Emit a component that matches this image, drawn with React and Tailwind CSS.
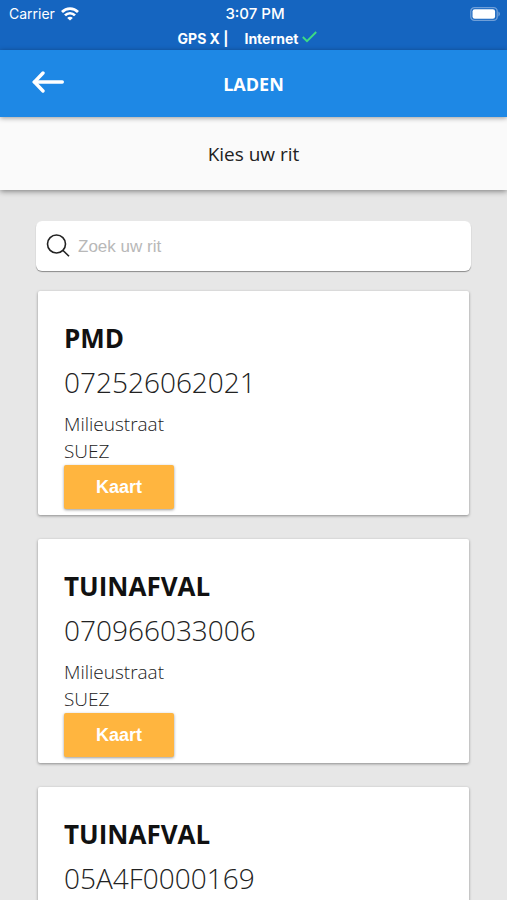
import { useState } from 'react'

const ritten = [
  { id: '072526062021', type: 'PMD', straat: 'Milieustraat', klant: 'SUEZ' },
  { id: '070966033006', type: 'TUINAFVAL', straat: 'Milieustraat', klant: 'SUEZ' },
  { id: '05A4F0000169', type: 'TUINAFVAL', straat: 'Milieustraat', klant: 'SUEZ' },
]

function WifiIcon() {
  return (
    <svg width="18" height="14" viewBox="0 0 18 14" fill="none" stroke="white" strokeWidth="2.7">
      <path d="M1 5C5.4 .4 12.6 .4 17 5" />
      <path d="M4 8.4C6.8 5.5 11.2 5.5 14 8.4" />
      <path d="M9 13.6L6.2 10.9C7.8 9.4 10.2 9.4 11.8 10.9Z" fill="white" stroke="none" />
    </svg>
  )
}

function BatteryIcon() {
  return (
    <svg width="31" height="14" viewBox="0 0 31 14">
      <rect x="0.8" y="0.7" width="26.4" height="12.6" rx="3.6" fill="none" stroke="#6f9fd8" strokeWidth="1.3" />
      <rect x="2.5" y="2.3" width="22.6" height="9.4" rx="2.2" fill="white" />
      <path d="M28.4 4.6C30.4 5.4 30.4 8.6 28.4 9.4Z" fill="#6f9fd8" />
    </svg>
  )
}

function StatusBar() {
  return (
    <div className="h-[50px] shrink-0 bg-[#1565c0] text-white font-['Inter',sans-serif]">
      <div className="grid grid-cols-3 items-center h-7 pl-[9px] pr-[6px] text-sm">
        <div className="flex items-center gap-[6px]">
          <span>Carrier</span>
          <WifiIcon />
        </div>
        <span className="text-center text-[15px] font-medium">3:07 PM</span>
        <div className="flex justify-end">
          <BatteryIcon />
        </div>
      </div>
      <div className="flex justify-center items-center h-[22px] pr-3 text-sm font-bold">
        <span className="mr-4">GPS X |</span>
        <span className="mr-1">Internet</span>
        <svg width="15" height="12" viewBox="0 0 15 12" fill="none" stroke="#3ddc84" strokeWidth="1.9" className="mb-1">
          <path d="M.8 6L5 10.2L14.2 1" />
        </svg>
      </div>
    </div>
  )
}

function RitCard({ rit }) {
  return (
    <li className="bg-white rounded-xs px-[26px] pt-7 pb-[6px] shadow-[0_1px_3px_rgba(0,0,0,0.4)]">
      <h2 className="text-[26px] leading-[38px] font-bold text-[#111111]">{rit.type}</h2>
      <p className="text-[28px] leading-[50px] font-light text-[#222222]">{rit.id}</p>
      <div className="pt-1 text-[19px] leading-[27px] font-light text-[#222222]">
        <p>{rit.straat}</p>
        <p>{rit.klant}</p>
      </div>
      <button
        type="button"
        className="block w-[110px] h-11 rounded-xs bg-[#ffb53f] text-white text-[18px] font-bold font-['Liberation_Sans',sans-serif] shadow-[0_1px_3px_rgba(0,0,0,0.4)]"
      >
        Kaart
      </button>
    </li>
  )
}

function App() {
  const [zoek, setZoek] = useState('')

  const gefilterd = ritten.filter(r => `${r.type} ${r.id}`.toLowerCase().includes(zoek.toLowerCase()))

  return (
    <div className="flex flex-col h-screen bg-[#e7e7e7] font-['Open_Sans',sans-serif]">
      <StatusBar />

      {/* Header */}
      <header className="grid grid-cols-3 items-center h-[67px] shrink-0 px-8 bg-[#1e88e5] text-white z-20 shadow-[0_1px_5px_rgba(0,0,0,0.4)]">
        <button type="button" aria-label="Terug" className="justify-self-start pb-1">
          <svg width="32" height="22" viewBox="0 0 32 22" fill="none" stroke="white" strokeWidth="3.4" strokeLinecap="round" strokeLinejoin="miter">
            <path d="M11 2L2.4 11L11 20" />
            <path d="M2.5 11H30.3" />
          </svg>
        </button>
        <h1 className="pt-[2px] text-center text-[18px] font-bold">LADEN</h1>
      </header>

      <div className="flex items-center justify-center h-[73px] pt-[2px] shrink-0 bg-[#fafafa] text-[19px] text-[#222222] z-10 shadow-[0_1px_6px_rgba(0,0,0,0.5)]">
        Kies uw rit
      </div>

      <main className="flex-1 min-h-0 overflow-y-auto [scrollbar-width:none] px-9 pt-[31px] pb-6">
        {/* Search */}
        <label className="flex items-center h-[50px] pl-[10px] pr-3 gap-2 bg-white rounded-md shadow-[0_1px_1px_rgba(0,0,0,0.4)]">
          <svg width="24" height="24" viewBox="0 0 24 24" fill="none" stroke="#222222" strokeWidth="1.6" className="shrink-0">
            <circle cx="10.5" cy="9" r="9" transform="translate(0 1)" />
            <path d="M16.8 16.2L23 22.2" />
          </svg>
          <input
            type="text"
            aria-label="Zoek uw rit"
            placeholder="Zoek uw rit"
            value={zoek}
            onChange={e => setZoek(e.target.value)}
            className="flex-1 min-w-0 pt-[2px] bg-transparent outline-none text-[17px] font-['Liberation_Sans',sans-serif] text-[#222222] placeholder:text-[#b8b8b8]"
          />
        </label>

        <ul className="flex flex-col gap-6 mt-5 px-[2px]">
          {gefilterd.map(rit => (
            <RitCard key={rit.id} rit={rit} />
          ))}
        </ul>
      </main>
    </div>
  )
}

export default App
